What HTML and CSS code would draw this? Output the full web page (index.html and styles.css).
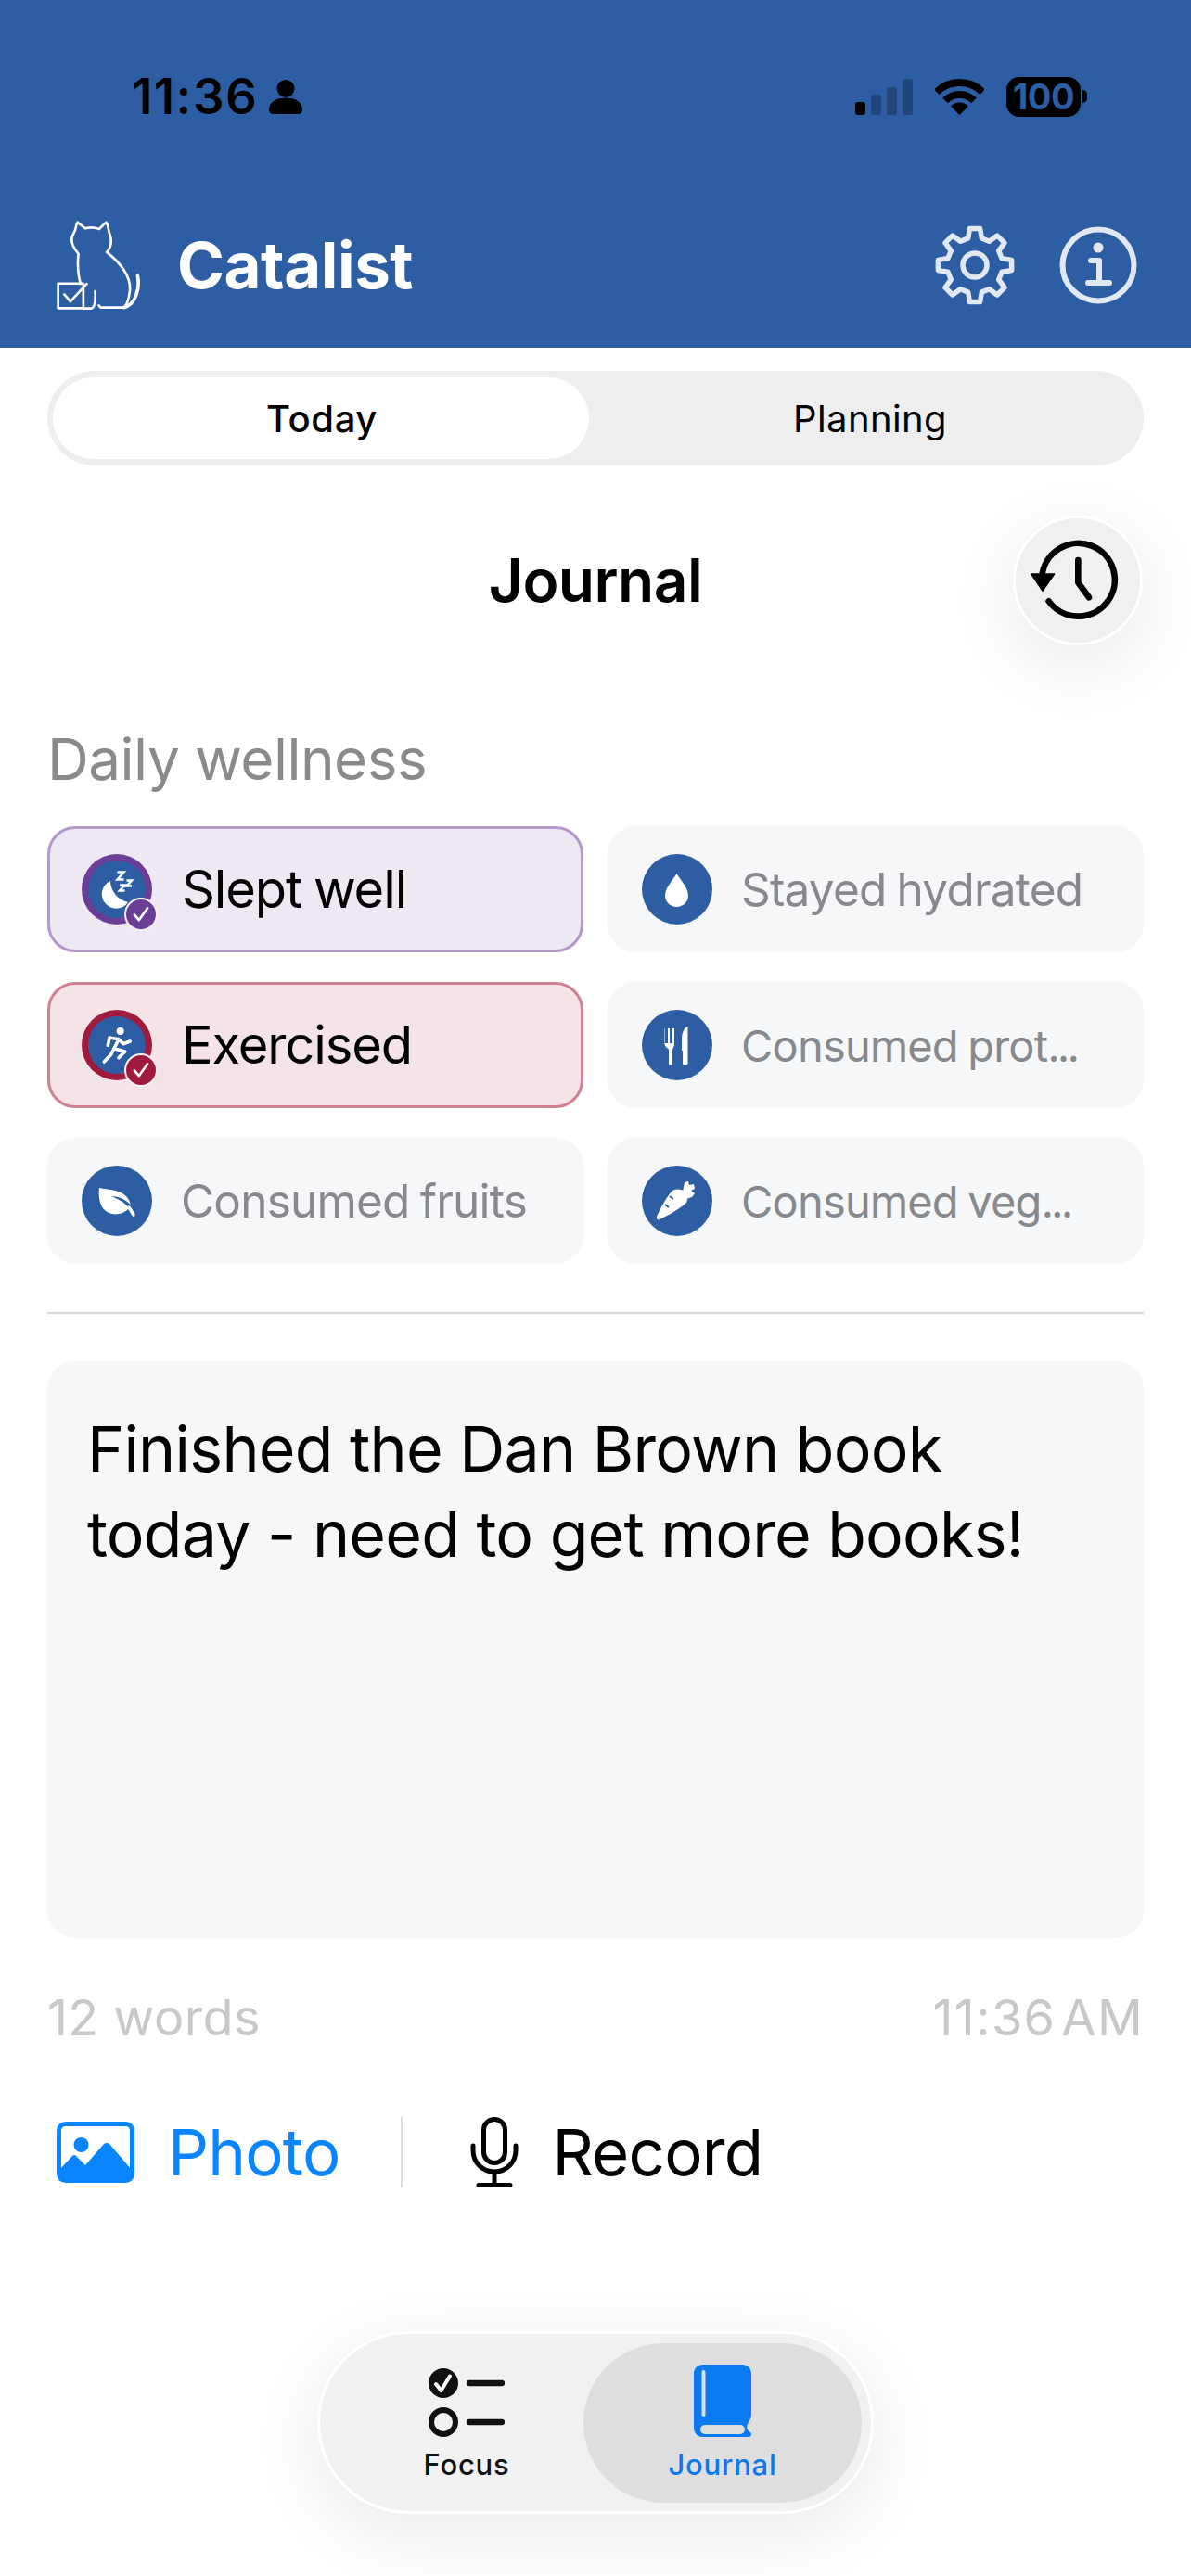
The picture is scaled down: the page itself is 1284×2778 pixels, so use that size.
FILE: index.html
```html
<!DOCTYPE html>
<html lang="en">
<head>
<meta charset="utf-8">
<title>Catalist Journal</title>
<link rel="stylesheet" href="styles.css">
</head>
<body>
<div class="page">
  <header class="header">
    <div class="status">
      <div class="status-left">
        <span class="time">11:36</span>
        <svg class="person" viewBox="0 0 36 37"><circle cx="18" cy="9.5" r="9.5"/><path d="M0 32C0 24 8 19.500 18 19.500S36 24 36 32C36 35 34.500 37 31 37H5C1.500 37 0 35 0 32Z"/></svg>
      </div>
      <div class="status-right">
        <svg class="signal" viewBox="0 0 62 39">
          <rect x="0" y="25" width="11" height="14" rx="3"/>
          <rect class="dim" x="17" y="17" width="11" height="22" rx="3"/>
          <rect class="dim" x="34" y="9" width="11" height="30" rx="3"/>
          <rect class="dim" x="51" y="0" width="11" height="39" rx="3"/>
        </svg>
        <svg class="wifi" viewBox="0 0 53 40">
          <path class="arc" d="M1.750 15.250A35 35 0 0 1 51.250 15.250"/>
          <path class="arc" d="M10.940 24.440A22 22 0 0 1 42.060 24.440"/>
          <path d="M26.500 40L17 30.500A13.400 13.400 0 0 1 36 30.500Z"/>
        </svg>
        <div class="battery"><span class="battery-body">100</span><span class="battery-cap"></span></div>
      </div>
    </div>
    <div class="appbar">
      <svg class="logo" viewBox="85 50 275 295">
        <path d="M165 258C155 225 155 190 158 160C140 140 128 118 142 95C152 80 148 68 155 58L180 78C195 74 210 74 225 80L248 58C256 68 254 80 258 92C266 112 268 135 250 155C300 195 328 240 325 280C322 305 318 325 305 335H230L224 328"/>
        <path d="M350 232C358 270 345 325 305 335"/>
        <path d="M212 282C214 310 212 338 198 338H175"/>
        <rect x="92" y="257" width="82" height="80"/>
        <path d="M112 292L132 315L185 258"/>
      </svg>
      <span class="brand">Catalist</span>
      <svg class="gear" viewBox="0 0 86 86">
        <path d="M37.400 3.400L48.600 3.400L50.300 13.900L58.500 17.300L67.100 11.100L75 18.900L68.700 27.500L72.100 35.700L82.600 37.400L82.600 48.600L72.100 50.300L68.700 58.500L75 67.100L67.100 75L58.500 68.700L50.300 72.100L48.600 82.600L37.400 82.600L35.700 72.100L27.500 68.700L18.900 75L11 67.100L17.300 58.500L13.900 50.300L3.400 48.600L3.400 37.400L13.900 35.700L17.300 27.500L11 18.900L18.900 11L27.500 17.300L35.700 13.900Z"/>
        <circle cx="43" cy="43" r="13"/>
      </svg>
      <svg class="info" viewBox="0 0 84 84">
        <circle class="ring" cx="42" cy="42" r="38.500"/>
        <circle class="dot" cx="42" cy="23" r="5.500"/>
        <path class="stem" d="M34 37H43V61M31 61H54"/>
      </svg>
    </div>
  </header>

  <main class="content">
    <div class="segment">
      <div class="seg-item seg-active">Today</div>
      <div class="seg-item">Planning</div>
    </div>

    <div class="title-row">
      <h1 class="title">Journal</h1>
      <button class="history" aria-label="History">
        <svg viewBox="276 528 420 420">
          <path class="hist-line" d="M370 725A118 118 0 1 1 392 805"/>
          <path class="hist-line" d="M487 672V745L522 793"/>
          <path class="hist-arrow" d="M335 717H410L372 772Z"/>
        </svg>
      </button>
    </div>

    <h2 class="section">Daily wellness</h2>

    <div class="grid">
      <div class="card card-sleep">
        <div class="badge-wrap">
          <svg class="icon ring-sleep" viewBox="0 0 76 76">
            <circle class="disc" cx="38" cy="38" r="31"/>
            <path class="fill" d="M31 29A15.500 15.500 0 1 0 50 52A24 24 0 0 1 31 29Z"/>
            <path class="zed" d="M38.500 19.500H45.500L38.500 27.500H45.500M48.500 28.500H54L48.500 34.500H54M41 33.500H46.500L41 39.500H46.500"/>
          </svg>
          <svg class="tick tick-sleep" viewBox="0 0 36 36"><path d="M10 18.500L15.500 25L26 10.500"/></svg>
        </div>
        <span class="label on">Slept well</span>
      </div>
      <div class="card">
        <svg class="icon" viewBox="0 0 76 76">
          <circle class="disc" cx="38" cy="38" r="38"/>
          <path class="fill" d="M37.500 21C33 29 25 36 25 45C25 52 31 57 37.500 57C44 57 50 52 50 45C50 36 42 29 37.500 21Z"/>
        </svg>
        <span class="label">Stayed hydrated</span>
      </div>
      <div class="card card-run">
        <div class="badge-wrap">
          <svg class="icon ring-run" viewBox="0 0 76 76">
            <circle class="disc" cx="38" cy="38" r="31"/>
            <circle class="fill" cx="41.700" cy="23" r="4"/>
            <path class="runner" d="M28.300 38.300L30 30L40 31.700L35 41.700L46.700 45L40 51.700M40 31.700L45 36.700L52.300 34M35 41.700L31.700 48.300L24.300 56"/>
          </svg>
          <svg class="tick tick-run" viewBox="0 0 36 36"><path d="M10 18.500L15.500 25L26 10.500"/></svg>
        </div>
        <span class="label on">Exercised</span>
      </div>
      <div class="card">
        <svg class="icon" viewBox="0 0 76 76">
          <circle class="disc" cx="38" cy="38" r="38"/>
          <path class="fill" d="M25 20V36H28V20H30V36H33V20H35V37C35 40 33 42 33 43V58C33 60 29 60 29 58V43C29 42 24.500 40 24.500 37V20Z"/>
          <path class="fill" d="M49.500 18V58C49.500 60 44 60 44 58V44H43V32C43 24 46 19 49.500 18Z"/>
        </svg>
        <span class="label label-small">Consumed prot<span class="dots">...</span></span>
      </div>
      <div class="card">
        <svg class="icon" viewBox="0 0 76 76">
          <circle class="disc" cx="38" cy="38" r="38"/>
          <path class="fill" d="M19 24C32 27 48 25 53 42C46 36 40 33 31 33C38 35 46 39 51 46C44 54 30 55 23 46C19 40 18 32 19 24Z"/>
          <path class="leaf-stem" d="M51 45L56 53"/>
        </svg>
        <span class="label">Consumed fruits</span>
      </div>
      <div class="card">
        <svg class="icon" viewBox="0 0 76 76">
          <circle class="disc" cx="38" cy="38" r="38"/>
          <path class="fill" d="M33 27C37 25 42 25 46 28C49 31 50 36 48 40C42 46 28 54 19 58C17 59 15 57 16 55C20 46 27 33 33 27Z"/>
          <path class="fill" d="M44 28L46 18L50 17L51 21L56 20L57 25L53 27L57 30L54 34L48 36Z"/>
          <path class="carrot-cut" d="M30 33L34 36M25 42L29 45"/>
        </svg>
        <span class="label label-small">Consumed veg<span class="dots">...</span></span>
      </div>
    </div>

    <div class="divider"></div>

    <div class="entry">Finished the Dan Brown book today - need to get more books!</div>

    <div class="meta">
      <span>12 words</span>
      <span class="meta-time">11:36<span class="ampm">AM</span></span>
    </div>

    <div class="actions">
      <svg class="photo" viewBox="0 0 84 66">
        <rect class="photo-frame" x="2.500" y="2.500" width="79" height="61" rx="7"/>
        <circle class="photo-fill" cx="26.500" cy="25" r="8"/>
        <path class="photo-fill" d="M3 52L17 37C18.500 35.500 20 36 21 37L31 47L51 24C53 22.500 55 22.500 57 24L81 52V60C81 63 79 65 76 65H8C5 65 3 63 3 60Z"/>
      </svg>
      <span class="action-text photo-text">Photo</span>
      <span class="action-sep"></span>
      <svg class="mic" viewBox="0 0 52 77">
        <rect x="14.500" y="2.500" width="23" height="47" rx="11.500"/>
        <path d="M3 31V36C3 49 13 59 26 59S49 49 49 36V31M26 59V73M9 73.500H43"/>
      </svg>
      <span class="action-text">Record</span>
    </div>
  </main>

  <nav class="tabbar">
    <div class="tab">
      <svg class="focus-icon" viewBox="0 0 82 74">
        <circle cx="16" cy="16" r="16"/>
        <path class="focus-tick" d="M8 17L13.500 24L23 8.500"/>
        <path class="focus-line" d="M44 16H79M44 58H79"/>
        <circle class="focus-ring" cx="16" cy="58" r="13"/>
      </svg>
      <span class="tab-label">Focus</span>
    </div>
    <div class="tab tab-active">
      <svg class="book-icon" viewBox="0 0 62 78">
        <path class="book-body" d="M10 0H52C58 0 62 4 62 10V54C62 59 59 61 58 64C56 68 58 72 61 73C63 75 62 78 59 78H10C4 78 0 74 0 68V10C0 4 4 0 10 0Z"/>
        <path class="book-light" d="M10.500 8V54"/>
        <path class="book-light book-page" d="M12 70H50"/>
      </svg>
      <span class="tab-label">Journal</span>
    </div>
  </nav>
</div>
</body>
</html>
```
FILE: styles.css
```css
* { box-sizing: border-box; }
html, body { margin: 0; padding: 0; background: #fff; }
body { font-family: Inter, "Liberation Sans", sans-serif; color: #000; }
.page { position: relative; width: 1284px; height: 2778px; overflow: hidden; background: #fff; }

.header { height: 375px; background: #2d5ea3; padding-top: 82px; }
.status { display: flex; justify-content: space-between; align-items: center; height: 44px; padding: 0 112px 0 142px; }
.status-left { display: flex; align-items: center; gap: 12px; }
.time { font-size: 53px; font-weight: 600; letter-spacing: 1.400px; line-height: 44px; }
.person { width: 36px; height: 37px; fill: #000; }
.status-right { display: flex; align-items: center; gap: 24px; }
.signal { width: 62px; height: 39px; fill: #000; }
.signal .dim { opacity: 0.25; }
.wifi { width: 53px; height: 40px; fill: #000; }
.wifi .arc { fill: none; stroke: #000; stroke-width: 8; }
.battery { display: flex; align-items: center; gap: 2px; }
.battery-body { display: block; width: 80px; height: 43px; border-radius: 14px; background: #000; color: #2d5ea3; font-size: 38px; font-weight: 700; line-height: 43px; text-align: center; letter-spacing: -0.500px; }
.battery-cap { display: block; width: 5px; height: 14px; background: #000; border-radius: 0 7px 7px 0; }

.appbar { display: flex; align-items: center; height: 100px; margin-top: 110px; padding: 0 58px 0 60px; }
.logo { width: 92px; height: 98px; fill: none; stroke: #fff; stroke-width: 8; stroke-linecap: round; stroke-linejoin: round; }
.logo path:nth-child(2) { stroke-width: 11; }
.brand { margin-left: 39px; color: #fff; font-size: 69px; font-weight: 700; letter-spacing: -0.500px; line-height: 100px; }
.gear { width: 86px; height: 86px; margin-left: auto; fill: none; stroke: #e2e8f2; stroke-width: 5.500; stroke-linejoin: round; }
.info { width: 84px; height: 84px; margin-left: 48px; }
.info .ring { fill: none; stroke: #e2e8f2; stroke-width: 6; }
.info .dot { fill: #e2e8f2; }
.info .stem { fill: none; stroke: #e2e8f2; stroke-width: 6; stroke-linecap: round; stroke-linejoin: round; }

.content { padding: 25px 51px 0; }
.segment { display: flex; height: 102px; padding: 7px 6px; border-radius: 51px; background: #eeeeee; }
.seg-item { display: flex; align-items: center; justify-content: center; flex: 1; font-size: 40px; letter-spacing: 0.400px; }
.seg-active { flex: 0 0 578px; padding-left: 2px; border-radius: 44px; background: #fff; font-weight: 500; letter-spacing: 0.600px; }
.seg-item:not(.seg-active) { margin-left: 14px; }

.title-row { position: relative; display: flex; align-items: center; justify-content: center; height: 140px; margin-top: 54px; }
.title { margin: 0; font-size: 64px; font-weight: 600; line-height: 76px; letter-spacing: -0.500px; }
.history { position: absolute; top: 0; right: 1px; width: 140px; height: 140px; padding: 0; border: 3px solid #fff; border-radius: 50%; background: #f0f0f0; box-shadow: 0 20px 80px rgba(0, 0, 0, 0.09); }
.history svg { display: block; width: 140px; height: 140px; margin: -3px; }
.hist-line { fill: none; stroke: #000; stroke-width: 20; stroke-linecap: round; stroke-linejoin: round; }
.hist-arrow { fill: #000; stroke: #000; stroke-width: 4; stroke-linejoin: round; }

.section { margin: 88px 0 0; color: #8a8a8a; font-size: 62px; font-weight: 400; line-height: 70px; letter-spacing: -0.500px; }

.grid { display: grid; grid-template-columns: 578px 578px; column-gap: 26px; row-gap: 32px; margin-top: 37px; }
.card { display: flex; align-items: center; height: 136px; padding-left: 37px; border-radius: 30px; background: #f6f7f9; }
.card-sleep { background: #eee8f3; border: 3px solid #b398c9; padding-left: 34px; }
.card-run { background: #f4e3e7; border: 3px solid #cf8093; padding-left: 34px; }
.badge-wrap { position: relative; flex: none; width: 76px; height: 76px; }
.icon { display: block; flex: none; width: 76px; height: 76px; }
.ring-sleep { border-radius: 50%; background: #6a3d97; }
.ring-run { border-radius: 50%; background: #9f1a3c; }
.disc { fill: #2d5ea3; }
.fill { fill: #fff; }
.zed { fill: none; stroke: #fff; stroke-width: 2.500; }
.runner { fill: none; stroke: #fff; stroke-width: 3.600; stroke-linecap: round; stroke-linejoin: round; }
.leaf-stem { fill: none; stroke: #fff; stroke-width: 3.500; stroke-linecap: round; }
.carrot-cut { fill: none; stroke: #2d5ea3; stroke-width: 2; }
.tick { position: absolute; right: -6px; bottom: -7px; width: 36px; height: 36px; border: 2.500px solid #f6eef8; border-radius: 50%; fill: none; stroke: #fff; stroke-width: 3; stroke-linecap: round; stroke-linejoin: round; }
.tick-sleep { background: #6a3d97; }
.tick-run { background: #9f1a3c; }
.label { margin-left: 31px; color: #87898c; font-size: 49.500px; letter-spacing: -0.800px; word-spacing: -2px; white-space: nowrap; }
.label.on { margin-left: 32px; color: #000; font-size: 56px; letter-spacing: -1.100px; }
.label-small { font-size: 47px; }
.dots { letter-spacing: -3px; }

.divider { height: 2px; margin-top: 52px; background: #d4d4d4; }
.entry { height: 622px; margin-top: 51px; padding: 48px 43px; border-radius: 30px; background: #f6f7f9; font-size: 68px; line-height: 92px; letter-spacing: -0.750px; }

.meta { display: flex; justify-content: space-between; margin-top: 54px; color: #c8c8c8; font-size: 54px; line-height: 64px; letter-spacing: 0.400px; }
.meta-time { letter-spacing: 1.300px; }
.ampm { margin-left: 6px; }

.actions { display: flex; align-items: center; height: 80px; margin-top: 73px; padding-left: 10px; }
.photo { flex: none; width: 84px; height: 66px; }
.photo-frame { fill: none; stroke: #0a84ff; stroke-width: 5; }
.photo-fill { fill: #0a84ff; }
.action-text { font-size: 69px; line-height: 80px; letter-spacing: -0.800px; }
.photo-text { margin-left: 36px; color: #0a84ff; }
.action-sep { width: 2px; height: 76px; margin: 0 73px 0 65px; background: #dcdcdc; }
.mic { flex: none; width: 52px; height: 77px; margin-right: 37px; fill: none; stroke: #000; stroke-width: 5; stroke-linecap: round; }

.tabbar { position: absolute; left: 342px; top: 2514px; display: flex; align-items: center; width: 600px; height: 197px; padding: 0 10px 0 32px; border: 3px solid #fff; border-radius: 98px; background: #f1f1f1; box-shadow: 0 20px 80px rgba(0, 0, 0, 0.09); }
.tab { display: flex; flex: none; flex-direction: column; align-items: center; justify-content: center; width: 252px; height: 172px; border-radius: 86px; color: #111; }
.tab-active { width: 300px; background: #dedede; color: #0a7af0; }
.tab-label { font-size: 31px; font-weight: 500; line-height: 36px; letter-spacing: 0.800px; margin-top: 12px; }
.focus-icon { display: block; width: 82px; height: 74px; fill: #111; margin-top: 4px; }
.focus-tick { fill: none; stroke: #fff; stroke-width: 4; stroke-linecap: round; stroke-linejoin: round; }
.focus-line { fill: none; stroke: #111; stroke-width: 6.500; stroke-linecap: round; }
.focus-ring { fill: none; stroke: #111; stroke-width: 6; }
.book-icon { display: block; width: 62px; height: 78px; }
.book-body { fill: #0a7af0; }
.book-light { fill: none; stroke: #dedede; stroke-width: 4; stroke-linecap: round; }
.book-page { stroke-width: 10; }
```
